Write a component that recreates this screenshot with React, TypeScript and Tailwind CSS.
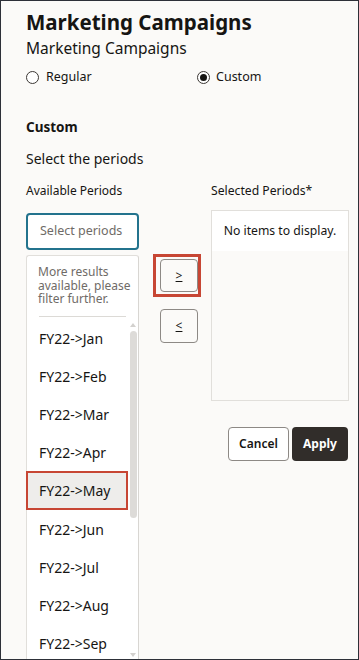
import React from "react";

const months = ["Jan", "Feb", "Mar", "Apr", "May", "Jun", "Jul", "Aug", "Sep"];

function Radio({ checked }: { checked?: boolean }) {
  return (
    <span className="w-[13px] h-[13px] rounded-full border-[1.5px] border-[#3b3734] bg-white flex items-center justify-center shrink-0">
      {checked && <span className="w-[7px] h-[7px] rounded-full bg-[#161513]" />}
    </span>
  );
}

export default function App() {
  return (
    <div className="w-[359px] h-[660px] border border-[#2d3038] bg-[#fbfaf8] overflow-hidden font-['Noto_Sans',sans-serif] text-[#161513]">
      <div className="pl-[25px] pt-[7px]">
        <div className="text-[20.5px] font-bold leading-[28px]">Marketing Campaigns</div>
        <div className="text-[15.5px] leading-[20px] mt-[2px]">Marketing Campaigns</div>
        <div className="flex items-center mt-[9px] h-[20px] text-[12.5px]">
          <div className="w-[171px] flex items-center gap-[7px]">
            <Radio />
            <span>Regular</span>
          </div>
          <div className="flex items-center gap-[6px]">
            <Radio checked />
            <span>Custom</span>
          </div>
        </div>
        <div className="mt-[30px] text-[13.5px] font-bold leading-[20px]">Custom</div>
        <div className="mt-[12px] text-[14px] leading-[20px]">Select the periods</div>
        <div className="flex mt-[13px]">
          <div className="w-[113px] shrink-0">
            <div className="text-[12px] leading-[18px]">Available Periods</div>
            <div className="mt-[13px] h-[37px] border-2 border-[#23738d] rounded-[4px] bg-white flex items-center pl-[12px] text-[12.5px] text-[#6f6b67]">
              Select periods
            </div>
            <div className="mt-[5px] h-[420px] border border-[#e1dfdb] border-r-[#d8d6d2] rounded-t-[3px] bg-white relative">
              <div className="pl-[11px] pt-[9px] text-[12px] leading-[13.5px] text-[#6f6b67] whitespace-nowrap">
                <div>More results</div>
                <div>available, please</div>
                <div>filter further.</div>
              </div>
              <div className="ml-[12px] mr-[12px] mt-[10px] border-t border-[#dcdad6]" />
              <div className="mt-[2px] flex">
                <div className="w-[102px]">
                  {months.map((m) => (
                    <div
                      key={m}
                      className={
                        m === "May"
                          ? "h-[39px] -ml-px pl-[11px] flex items-center text-[14px] bg-[#eeedeb] border-2 border-[#c74634]"
                          : "h-[38px] pl-[12px] pt-[2px] flex items-center text-[14px]"
                      }
                    >
                      FY22-&gt;{m}
                    </div>
                  ))}
                </div>
                <div className="w-[10px] relative">
                  <div className="absolute left-[2px] top-[4px] w-0 h-0 border-l-[3.5px] border-r-[3.5px] border-b-[4px] border-l-transparent border-r-transparent border-b-[#d3d1ce]" />
                  <div className="absolute left-[2px] top-[12px] w-[7px] h-[187px] rounded-full bg-[#dddbd8]" />
                  <div className="absolute left-[2px] top-[334px] w-0 h-0 border-l-[3.5px] border-r-[3.5px] border-t-[4px] border-l-transparent border-r-transparent border-t-[#d3d1ce]" />
                </div>
              </div>
            </div>
          </div>
          <div className="w-[72px] shrink-0 flex flex-col items-center pt-[77px] pl-[8px]">
            <div className="relative">
              <button className="w-[38px] h-[33px] rounded-[4px] border border-[#8d8985] bg-[#fbfaf8] text-[12px] underline flex items-center justify-center">
                &gt;
              </button>
              <div className="absolute left-[-7px] right-[-3px] top-[-5px] bottom-[-5px] border-[3px] border-[#c74634] pointer-events-none" />
            </div>
            <button className="mt-[17px] w-[38px] h-[34px] rounded-[4px] border border-[#8d8985] bg-[#fbfaf8] text-[12px] underline flex items-center justify-center">
              &lt;
            </button>
          </div>
          <div className="w-[138px] shrink-0">
            <div className="text-[12.2px] leading-[18px]">Selected Periods*</div>
            <div className="mt-[10px] h-[191px] border border-[#e1dfdb]">
              <div className="h-[40px] bg-white flex items-center justify-center text-[12.2px]">No items to display.</div>
            </div>
            <div className="mt-[26px] flex justify-end gap-[3px]">
              <button className="w-[61px] h-[34px] rounded-[4px] border border-[#8d8985] bg-white text-[12px] font-semibold">Cancel</button>
              <button className="w-[56px] h-[34px] rounded-[4px] bg-[#312d2a] text-white text-[12px] font-bold mr-[1px]">Apply</button>
            </div>
          </div>
        </div>
      </div>
    </div>
  );
}
